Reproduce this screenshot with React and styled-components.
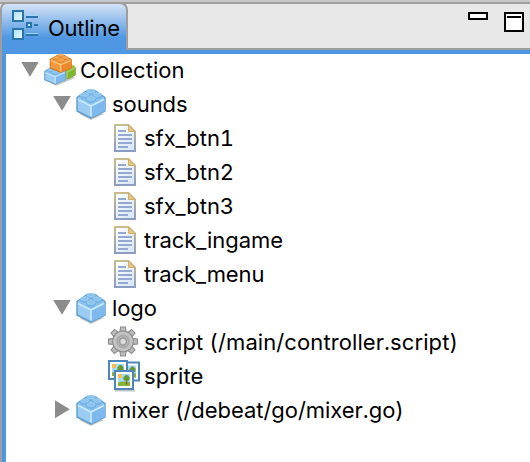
import React from "react";
import styled, { createGlobalStyle } from "styled-components";

const GlobalStyle = createGlobalStyle`
  * { box-sizing: border-box; }
  body { margin: 0; overflow: hidden; background: #fff; }
`;

const Panel = styled.main`
  display: flex;
  flex-direction: column;
  width: 530px;
  height: 462px;
  background: #fff;
  border-left: 2px solid #9e9e9e;
  font-family: Inter, "Liberation Sans", sans-serif;
  font-size: 22px;
  font-feature-settings: "tnum";
  color: #000;
`;

const Header = styled.header`
  display: flex;
  justify-content: space-between;
  height: 50px;
  flex: none;
  margin-left: -2px;
  background: linear-gradient(#c8c8c8 2px, #9e9e9e 2px, #9e9e9e 4px, #e8e8e8 4px, #e8e8e8 48px, #9e9e9e 48px);
`;

const Tab = styled.div`
  display: flex;
  width: 128px;
  height: 48px;
  margin-top: 2px;
  padding: 6px 0 0 10px;
  border: 2px solid #9e9e9e;
  border-bottom: 0;
  border-radius: 7px 8px 0 0;
  background: linear-gradient(#d4e3f6, #4f97e2 34px);
`;

const TabTitle = styled.span`
  margin-left: 8px;
  line-height: 26px;
  margin-top: 5px;
  letter-spacing: ${(p) => p.$spacing}px;
  white-space: nowrap;
`;

const WindowControls = styled.div`
  display: flex;
  gap: 16px;
  padding: 12px 6px 0 0;
`;

const Body = styled.section`
  flex: 1;
  border: solid #4f97e2;
  border-width: 4px 0 0 4px;
`;

const Row = styled.div`
  display: flex;
  height: 34px;
  padding-left: ${(p) => 14 + p.$level * 32}px;
`;

const Toggle = styled.span`
  width: 24px;
  height: 32px;
  flex: none;
`;

const IconBox = styled.span`
  width: 36px;
  height: 32px;
  flex: none;
`;

const Label = styled.span`
  line-height: 32px;
  letter-spacing: ${(p) => p.$spacing}px;
  white-space: nowrap;
`;

const Svg = styled.svg`
  display: block;
  overflow: visible;
`;

function Arrow({ open }) {
  return (
    <Svg width="24" height="32">
      <path d={open ? "M1.2 8H18.8L10 22.8Z" : "M3 6.2V24.2L17.8 15.2Z"} fill="#8c8c8c" />
    </Svg>
  );
}

function BrickShape({ top, left, right, edge, shine }) {
  return (
    <g strokeLinejoin="round">
      <path d="M1 9.5L6 6L11 2.5H19L24 6L29 9.5V23L15 30L1 23Z" fill={left} stroke={edge} strokeWidth="1.4" />
      <path d="M15 17.5L29 11V23L15 30Z" fill={right} />
      <path d="M2 10L11 3.5H19L28 10L15 17Z" fill={top} />
      <path d="M2 11.5L15 18L28 11.5M15 18V28.5" fill="none" stroke={shine} strokeWidth="1.7" />
      {[[15, 3.8], [8.5, 7.5], [21.5, 7.5], [15, 11.5]].map(([x, y]) => (
        <g key={`${x}-${y}`}>
          <path d={`M${x - 4.5} ${y - 1}V${y + 1}C${x - 3} ${y + 3.5} ${x + 3} ${y + 3.5} ${x + 4.5} ${y + 1}V${y - 1}`} fill={right} stroke={edge} strokeOpacity=".6" strokeWidth=".8" />
          <ellipse cx={x} cy={y - 1} rx="4.3" ry="1.7" fill={top} stroke={shine} strokeOpacity=".6" strokeWidth=".6" />
        </g>
      ))}
    </g>
  );
}

const BLUE = { top: "#88c3ee", left: "#9bcdf4", right: "#7db9ec", edge: "#5f9ccc", shine: "#c8e8fc" };
const ORANGE = { top: "#f3a04c", left: "#f39a3e", right: "#ea882b", edge: "#cf7425", shine: "#ffc780" };
const GREEN = { top: "#a5cf55", left: "#99c544", right: "#80b52f", edge: "#739c35", shine: "#a9cf62" };

function Brick() {
  return (
    <Svg width="32" height="32">
      <path d="M3 26L15 32L28 26L15 24Z" fill="#000" opacity=".22" />
      <BrickShape {...BLUE} />
    </Svg>
  );
}

function Collection() {
  return (
    <Svg width="32" height="32">
      <path d="M3 27L12 32L31 24L25 20Z" fill="#000" opacity=".22" />
      <g transform="translate(14.5 8) scale(.58 .57)"><BrickShape {...GREEN} /></g>
      <g transform="translate(0 11.5) scale(.74 .62)"><BrickShape {...BLUE} /></g>
      <g transform="translate(5.5 -.5) scale(.75 .63)"><BrickShape {...ORANGE} /></g>
    </Svg>
  );
}

function Document() {
  return (
    <Svg width="32" height="32">
      <defs>
        <linearGradient id="docEdge" x2="0" y2="1">
          <stop stopColor="#c9bc8c" /><stop offset="1" stopColor="#8c9cc4" />
        </linearGradient>
        <linearGradient id="docPaper" x2="1" y2="1">
          <stop stopColor="#fff" /><stop offset="1" stopColor="#d5e4f7" />
        </linearGradient>
      </defs>
      <path d="M7 3H20.5L27 9.5V29H7Z" fill="url(#docPaper)" stroke="url(#docEdge)" strokeWidth="2" />
      <path d="M20.5 3V9.5H27Z" fill="#e6c582" stroke="#d2b06c" strokeWidth="1" />
      <path d="M10 9H18M10 13H24M10 17H24M10 21H24M10 25H20" stroke="#93a9d0" strokeWidth="1.8" />
    </Svg>
  );
}

function Gear() {
  return (
    <Svg width="32" height="32">
      <g fill="#bcbcbc" stroke="#909090" strokeWidth="1.2">
        {[0, 45, 90, 135, 180, 225, 270, 315].map((angle) => (
          <path key={angle} d="M11.8 7L12.6 1H17.4L18.2 7" transform={`rotate(${angle} 15 15.5)`} />
        ))}
        <circle cx="15" cy="15.5" r="10.3" />
      </g>
      <circle cx="15" cy="15.5" r="9.7" fill="#c4c4c4" />
      <circle cx="15" cy="15.5" r="6" fill="#bcbcbc" stroke="#ababab" strokeWidth="1.8" />
      <circle cx="15" cy="15.5" r="3.4" fill="#dcdcdc" stroke="#999" strokeWidth="1.5" />
    </Svg>
  );
}

function Photo({ x, y }) {
  return (
    <g transform={`translate(${x} ${y})`}>
      <rect x="1" y="1" width="18" height="18" fill="#fff" stroke="#4e86ba" strokeWidth="2" />
      <rect x="4" y="4" width="12" height="12" fill="#a6dcf3" />
      <path d="M4 12.5L8 11.5L16 12V16H4Z" fill="#86b239" />
      <rect x="4" y="4" width="4" height="4" fill="#f7bd55" />
      <path d="M12.5 9V14.5" stroke="#735c35" strokeWidth="1.3" />
      <path d="M9.5 10V7L12.5 4.5L15.5 7V10L12.5 11.5Z" fill="#669834" />
    </g>
  );
}

function Sprite() {
  return (
    <Svg width="32" height="32">
      <path d="M7 30.5H27" stroke="#000" strokeWidth="2" opacity=".22" />
      <Photo x="12" y="1.5" />
      <Photo x="0" y="0" />
      <Photo x="6" y="10" />
    </Svg>
  );
}

function OutlineGlyph() {
  return (
    <Svg width="28" height="32">
      <defs>
        <linearGradient id="nodeFill" x2="1" y2="1">
          <stop stopColor="#a8dff8" /><stop offset="1" stopColor="#eefaff" />
        </linearGradient>
      </defs>
      <g fill="url(#nodeFill)" stroke="#2876ad" strokeWidth="2">
        <rect x="1" y="1" width="10" height="10" />
        <rect x="1" y="19" width="10" height="10" />
        <rect x="15" y="13" width="4" height="4" />
      </g>
      <path d="M14 7H26M22 15H26M14 25H26" stroke="#2876ad" strokeWidth="2" />
      <path d="M14 5.5H26M14 23.5H26" stroke="#a2d7f3" strokeWidth="1" />
    </Svg>
  );
}

const icons = { collection: Collection, brick: Brick, document: Document, gear: Gear, sprite: Sprite };

const rows = [
  { text: "Collection", icon: "collection", level: 0, open: true, spacing: 0.06 },
  { text: "sounds", icon: "brick", level: 1, open: true, spacing: -0.05 },
  { text: "sfx_btn1", icon: "document", level: 2, spacing: -0.05 },
  { text: "sfx_btn2", icon: "document", level: 2, spacing: -0.05 },
  { text: "sfx_btn3", icon: "document", level: 2, spacing: -0.05 },
  { text: "track_ingame", icon: "document", level: 2, spacing: -0.03 },
  { text: "track_menu", icon: "document", level: 2, spacing: -0.1 },
  { text: "logo", icon: "brick", level: 1, open: true, spacing: -0.1 },
  { text: "script (/main/controller.script)", icon: "gear", level: 2, spacing: 0.09 },
  { text: "sprite", icon: "sprite", level: 2, spacing: 0.1 },
  { text: "mixer (/debeat/go/mixer.go)", icon: "brick", level: 1, open: false, spacing: -0.04 },
];

export default function App() {
  return (
    <Panel>
      <GlobalStyle />
      <Header>
        <Tab>
          <OutlineGlyph />
          <TabTitle $spacing={-0.25}>Outline</TabTitle>
        </Tab>
        <WindowControls>
          <Svg width="20" height="8"><rect x="1" y="1" width="18" height="6" fill="#fff" stroke="#000" strokeWidth="2" /></Svg>
          <Svg width="20" height="20">
            <rect x="1" y="1" width="18" height="18" fill="#fff" stroke="#000" strokeWidth="2" />
            <path d="M3 5H17" stroke="#000" strokeWidth="2" />
          </Svg>
        </WindowControls>
      </Header>
      <Body>
        {rows.map((row) => {
          const Icon = icons[row.icon];
          return (
            <Row key={row.text} $level={row.level}>
              <Toggle>{row.open !== undefined && <Arrow open={row.open} />}</Toggle>
              <IconBox><Icon /></IconBox>
              <Label $spacing={row.spacing}>{row.text}</Label>
            </Row>
          );
        })}
      </Body>
    </Panel>
  );
}
